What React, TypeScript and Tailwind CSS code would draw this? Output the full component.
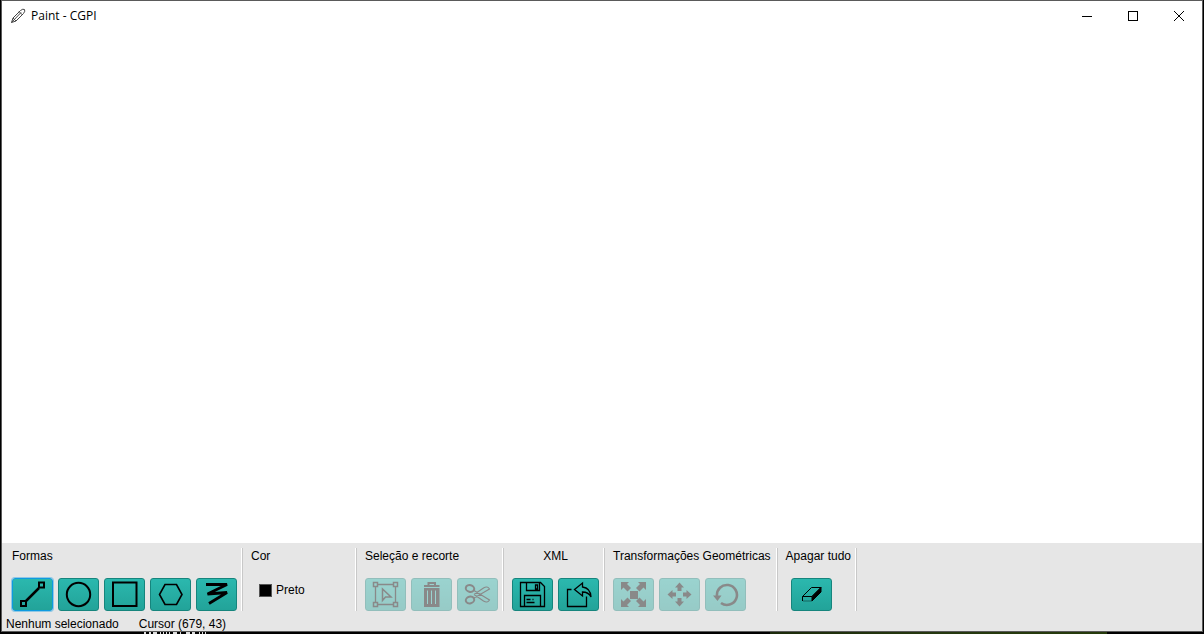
import type { ReactNode } from 'react';

type ToolProps = { label: string; disabled?: boolean; selected?: boolean; children: ReactNode };

function Tool({ label, disabled, selected, children }: ToolProps) {
  return (
    <button
      type="button"
      aria-label={label}
      aria-pressed={selected}
      disabled={disabled}
      className={
        'flex h-[33px] w-[41px] items-center justify-center rounded-[3px] border bg-gradient-to-b from-[#2bb8ae] to-[#22a399] text-black disabled:opacity-40 ' +
        (selected ? 'border-[#0f9be0] ring-1 ring-[#0f9be0]/40' : 'border-[#16857d]')
      }
    >
      <svg width="27" height="27" viewBox="0 0 27 27" fill="none" stroke="currentColor" strokeWidth="2" aria-hidden="true">
        {children}
      </svg>
    </button>
  );
}

function Separator() {
  return <div className="mt-[5px] h-[63px] w-[2px] shrink-0 border-l border-white bg-[#c8c8c8]" />;
}

type GroupProps = { title: string; centered?: boolean; className?: string; children: ReactNode };

function Group({ title, centered, className = 'pr-1', children }: GroupProps) {
  return (
    <>
      <section className={'flex shrink-0 flex-col pl-2 ' + className}>
        <h2 className={'mt-[5px] h-4 text-xs leading-4 whitespace-nowrap ' + (centered ? 'text-center' : '')}>{title}</h2>
        <div className="mt-[14px] flex gap-[5px]">{children}</div>
      </section>
      <Separator />
    </>
  );
}

function TitleBar() {
  return (
    <header className="flex h-[29px] items-center pl-2">
      <svg className="shrink-0" width="16" height="16" viewBox="0 0 16 16" fill="none" stroke="#444" strokeWidth="1" aria-hidden="true">
        <path d="M1.500 14.500 3 10 10.500 2.500Q13 .5 14.500 1.500 15.500 3 13.500 5.500L6 13ZM3 10l3 3M9 3.500l3.500 3.500M1.500 14.500 11 4.500" />
      </svg>
      <h1 className="ml-[5px] flex-1 font-['Open_Sans','Noto_Sans',sans-serif] text-xs leading-4">Paint - CGPI</h1>
      <div className="flex self-stretch">
        <button type="button" aria-label="Minimizar" className="flex w-[46px] items-center justify-center">
          <svg width="10" height="10" viewBox="0 0 10 10" stroke="black"><path d="M0 5.500h10" /></svg>
        </button>
        <button type="button" aria-label="Maximizar" className="flex w-[46px] items-center justify-center">
          <svg width="10" height="10" viewBox="0 0 10 10" fill="none" stroke="black"><rect x=".5" y=".5" width="9" height="9" /></svg>
        </button>
        <button type="button" aria-label="Fechar" className="flex w-[46px] items-center justify-center">
          <svg width="10" height="10" viewBox="0 0 10 10" stroke="black"><path d="m0 0 10 10M10 0 0 10" /></svg>
        </button>
      </div>
    </header>
  );
}

function Toolbar() {
  return (
    <div className="flex h-[73px] overflow-hidden pl-[2px]">
      <Group title="Formas">
        <Tool label="Reta" selected>
          <path d="M7 20 20 7" strokeWidth="2.500" />
          <path d="M2 20h5v5H2zM20 1.500h5v5h-5z" />
        </Tool>
        <Tool label="Círculo"><circle cx="13.500" cy="13.500" r="11.700" /></Tool>
        <Tool label="Retângulo"><path d="M2 1.500h23.500v23.500H2z" /></Tool>
        <Tool label="Polígono"><path d="M8 3.500h11.500l5.500 10-5.500 10H8l-5.500-10z" strokeWidth="1.600" /></Tool>
        <Tool label="Linha poligonal"><path d="M3 3.500h21L4.500 13l19.500-1.500L6 22.500" strokeWidth="2.800" strokeLinejoin="bevel" /></Tool>
      </Group>
      <Group title="Cor" className="w-[112px]">
        <label className="flex items-center pt-1 pl-2">
          <span className="size-[13px] border border-[#555] bg-black" />
          <select aria-label="Cor" defaultValue="preto" className="ml-1 w-16 appearance-none bg-transparent text-xs leading-4">
            <option value="preto">Preto</option>
          </select>
        </label>
      </Group>
      <Group title="Seleção e recorte">
        <Tool label="Selecionar" disabled>
          <path d="M3.500 5.500v16M23.500 5.500v16M5.500 3.500h16M5.500 23.500h16" strokeWidth="1.300" />
          <path d="M1.500 1.500h4v4h-4zM21.500 1.500h4v4h-4zM1.500 21.500h4v4h-4zM21.500 21.500h4v4h-4zM10.500 8v11.500l3-3.500h5.500z" strokeWidth="1.500" />
        </Tool>
        <Tool label="Excluir" disabled>
          <path d="M10.500 4V2h6.500v2" />
          <path d="M6 4h15.500v2H6zM6 7h15.500v19H6z" fill="currentColor" stroke="none" />
          <path d="M9.500 9.500v13.500M13.500 9.500v13.500M17.500 9.500v13.500" stroke="#2bb8ae" strokeWidth="1" />
        </Tool>
        <Tool label="Recortar" disabled>
          <ellipse cx="6" cy="7.500" rx="4.300" ry="3.300" transform="rotate(15 6 7.500)" />
          <ellipse cx="6" cy="19" rx="4.300" ry="3.300" transform="rotate(-15 6 19)" />
          <path d="m10 9.500 15.500 9.500q-2 3.500-6 1L10 13.500M10 17l15.500-9q-2-3.500-6-1L10 13.500" strokeWidth="1.100" />
        </Tool>
      </Group>
      <Group title="XML" centered>
        <Tool label="Salvar XML">
          <path d="M1.500 1.500h20l4 4v20h-24zM7.500 2v7.500h13V2M5.500 25V14.500h16V25M16.500 4h2v4h-2zM7.500 18.500h4M13.500 18.500h1M7.500 21.500h8" strokeWidth="1.300" />
        </Tool>
        <Tool label="Abrir XML">
          <path d="M6.500 8.500h-4v17h19v-10M9.500 8.500l8-6.500v4q8 1 8.500 10-2.500-5-8.500-5v4z" strokeWidth="1.300" />
        </Tool>
      </Group>
      <Group title="Transformações Geométricas" className="pr-[5px]">
        <Tool label="Escala" disabled>
          <path d="M10 10h8v8h-8zM1 1h8L7 3l4 4-3.500 3.500-4-4L1 9zM26 1v8l-2.500-2.500-4 4L16 7l4-4L18 1zM1 26v-8l2.500 2.500 4-4L11 20l-4 4 2 2zM26 26h-8l2-2-4-4 3.500-3.500 4 4L26 18z" fill="currentColor" stroke="none" />
        </Tool>
        <Tool label="Mover" disabled>
          <path d="m13.500 1.500 4.500 5h-2.500V10h-4V6.500H9zM13.500 25.500l4.500-5h-2.500V17h-4v3.500H9zM1.500 13.500l5-4.500v2.500H10v4H6.500V18zM25.500 13.500l-5-4.500v2.500H17v4h3.500V18z" fill="currentColor" stroke="none" />
        </Tool>
        <Tool label="Girar" disabled>
          <path d="M5 15a10 10 0 1 1 4 7" strokeWidth="2.600" />
          <path d="M1 14.500h8.500L5.500 20z" fill="currentColor" stroke="none" />
        </Tool>
      </Group>
      <Group title="Apagar tudo">
        <div className="pl-[5px]">
          <Tool label="Apagar tudo">
            <path d="m4.500 15.500 9-9h9.500l-9 9zM4.500 15.500v4.500" strokeWidth="1" />
            <path d="M5 20h9" strokeWidth="1" strokeOpacity=".4" />
            <path d="m14 15.500 9-9v4.500l-9 9z" fill="currentColor" strokeWidth="1" />
          </Tool>
        </div>
      </Group>
    </div>
  );
}

export default function App() {
  return (
    <div className="flex h-screen flex-col bg-black px-px font-['Liberation_Sans',Arial,sans-serif] text-xs text-black">
      <div className="flex min-h-0 flex-1 flex-col border border-[#5a5a5a] bg-white">
        <TitleBar />
        <main className="flex min-h-0 flex-1">
          <canvas aria-label="Área de desenho" className="h-full w-full" />
        </main>
        <footer className="bg-[#e6e6e6]">
          <Toolbar />
          <div className="flex h-[15px] gap-5 pl-1 leading-4">
            <span>Nenhum selecionado</span>
            <span>Cursor (679, 43)</span>
          </div>
        </footer>
      </div>
      <div className="flex h-[2px] shrink-0" aria-hidden="true">
        <div className="w-[64%] pl-[142px]">
          <svg width="64" height="2" viewBox="0 0 64 2" stroke="#ddd">
            <path d="M1 1h2M6 1h2M10 1h4M17 1h1M20 1h1M23 1h1M26 1h1M30 1h4M37 1h1M43 1h4M49 1h3M56 1h1M59 1h1M62 1h1" strokeWidth="2" />
          </svg>
        </div>
        <div className="w-[28%] bg-gradient-to-r from-[#1c2b0b] via-[#26380f] to-[#253a0b]" />
      </div>
    </div>
  );
}
